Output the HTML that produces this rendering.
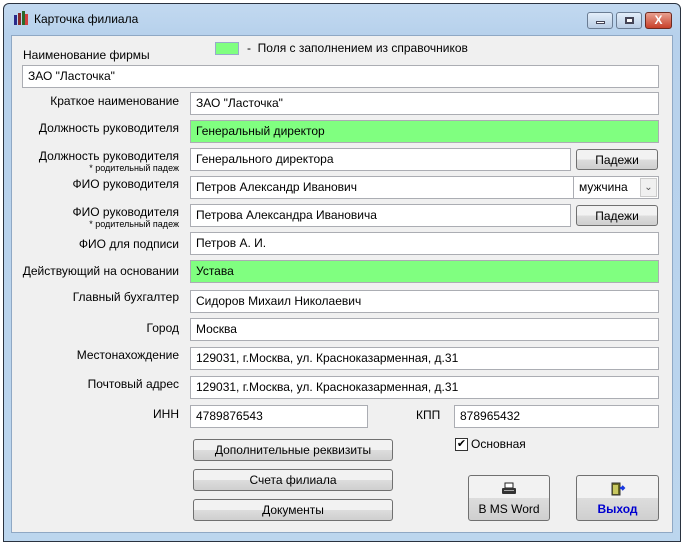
<!DOCTYPE html>
<html><head><meta charset="utf-8"><style>
*{box-sizing:border-box;margin:0;padding:0}
body{width:683px;height:543px;background:#fff;position:relative;overflow:hidden;font-family:"Liberation Sans",Arial,sans-serif;font-size:12px;color:#000}
.win{position:absolute;left:3px;top:3px;width:678px;height:539px;border:1px solid #2a3340;border-radius:6px 6px 0 0;background:linear-gradient(#c2d9f0,#b7d1ec 30px,#bcd6ee);}
.content{position:absolute;left:11px;top:35px;width:662px;height:498px;background:#f0f0f0;border:1px solid #8fa8c4}
.title{position:absolute;left:34px;top:12px;font-size:12px}
.a{position:absolute}
.f{position:absolute;background:#fff;border:1px solid #abadb3;height:23px;padding-left:5px;line-height:21px;white-space:nowrap}
.g{background:#80ff80}
.l{position:absolute;text-align:right;width:170px;left:9px;line-height:13px}
.s{font-size:9px;display:block;line-height:10px}
.b{position:absolute;border:1px solid #707070;border-radius:3px;background:linear-gradient(#f2f2f2 50%,#dddddd 50%,#cfcfcf);text-align:center;line-height:20px}
.wb{position:absolute;top:12px;height:17px;border:1px solid #6a7c93;border-radius:3px;background:linear-gradient(#e3eefa,#b9cde4)}
</style></head><body>
<div class="win"></div>
<div class="a" style="left:13px;top:10px;width:16px;height:16px">
<svg width="16" height="16"><rect x="1" y="5" width="3" height="10" fill="#2a2a8a"/><rect x="5" y="3" width="3" height="12" fill="#8a2a2a"/><rect x="9" y="1" width="3" height="14" fill="#2a6a2a"/><rect x="12" y="4" width="3" height="11" fill="#d04040"/></svg></div>
<div class="title">Карточка филиала</div>
<div class="wb" style="left:587px;width:26px"><div class="a" style="left:8px;top:8px;width:9px;height:3px;background:#fff;border:1px solid #445"></div></div>
<div class="wb" style="left:616px;width:26px"><div class="a" style="left:8px;top:4px;width:9px;height:7px;border:2px solid #445;background:#fff"></div></div>
<div class="a" style="left:645px;top:12px;width:27px;height:17px;border:1px solid #6d2a20;border-radius:3px;background:linear-gradient(#e8a090,#c8402a);color:#fff;font-weight:bold;text-align:center;line-height:15px;font-size:12px">X</div>
<div class="content"></div>

<div class="a" style="left:215px;top:42px;width:24px;height:13px;background:#80ff80;border:1px solid #9ac"></div>
<div class="a" style="left:247px;top:41px">-&nbsp; Поля с заполнением из справочников</div>
<div class="a" style="left:23px;top:48px">Наименование фирмы</div>
<div class="f" style="left:22px;top:65px;width:637px">ЗАО "Ласточка"</div>

<div class="l" style="top:95px">Краткое наименование</div>
<div class="f" style="left:190px;top:92px;width:469px">ЗАО "Ласточка"</div>
<div class="l" style="top:122px">Должность руководителя</div>
<div class="f g" style="left:190px;top:120px;width:469px">Генеральный директор</div>
<div class="l" style="top:150px">Должность руководителя<span class="s">* родительный падеж</span></div>
<div class="f" style="left:190px;top:148px;width:381px">Генерального директора</div>
<div class="b" style="left:576px;top:149px;width:82px;height:21px">Падежи</div>
<div class="l" style="top:178px">ФИО руководителя</div>
<div class="f" style="left:190px;top:176px;width:384px">Петров Александр Иванович</div>
<div class="f" style="left:573px;top:176px;width:86px">мужчина<div class="a" style="right:1px;top:1px;width:17px;height:19px;border:1px solid #ccc;background:#f0f0f0;text-align:center;line-height:17px;color:#555;font-size:10px;padding:0">&#8964;</div></div>
<div class="l" style="top:206px">ФИО руководителя<span class="s">* родительный падеж</span></div>
<div class="f" style="left:190px;top:204px;width:381px">Петрова Александра Ивановича</div>
<div class="b" style="left:576px;top:205px;width:82px;height:21px">Падежи</div>
<div class="l" style="top:238px">ФИО для подписи</div>
<div class="f" style="left:190px;top:232px;width:469px">Петров А. И.</div>
<div class="l" style="top:265px">Действующий на основании</div>
<div class="f g" style="left:190px;top:260px;width:469px">Устава</div>
<div class="l" style="top:291px">Главный бухгалтер</div>
<div class="f" style="left:190px;top:290px;width:469px">Сидоров Михаил Николаевич</div>
<div class="l" style="top:322px">Город</div>
<div class="f" style="left:190px;top:318px;width:469px">Москва</div>
<div class="l" style="top:349px">Местонахождение</div>
<div class="f" style="left:190px;top:347px;width:469px">129031, г.Москва, ул. Красноказарменная, д.31</div>
<div class="l" style="top:378px">Почтовый адрес</div>
<div class="f" style="left:190px;top:376px;width:469px">129031, г.Москва, ул. Красноказарменная, д.31</div>
<div class="l" style="top:408px">ИНН</div>
<div class="f" style="left:190px;top:405px;width:178px">4789876543</div>
<div class="a" style="left:416px;top:408px">КПП</div>
<div class="f" style="left:454px;top:405px;width:205px">878965432</div>

<div class="a" style="left:455px;top:438px;width:13px;height:13px;border:1px solid #333;background:#fff;font-size:11px;line-height:11px;text-align:center">✔</div>
<div class="a" style="left:471px;top:437px">Основная</div>

<div class="b" style="left:193px;top:439px;width:200px;height:22px">Дополнительные реквизиты</div>
<div class="b" style="left:193px;top:469px;width:200px;height:22px">Счета филиала</div>
<div class="b" style="left:193px;top:499px;width:200px;height:22px">Документы</div>

<div class="b" style="left:468px;top:475px;width:82px;height:46px;line-height:14px;padding-top:6px">
<svg width="16" height="14"><rect x="4" y="1" width="8" height="5" fill="#fff" stroke="#222"/><rect x="1" y="6" width="14" height="6" rx="1" fill="#333"/><rect x="3" y="8" width="10" height="1" fill="#aaa"/></svg><br><span style="line-height:20px">B MS Word</span></div>
<div class="b" style="left:576px;top:475px;width:83px;height:46px;line-height:14px;padding-top:6px">
<svg width="16" height="14"><rect x="2" y="1" width="8" height="12" fill="#6a6a20" stroke="#333"/><rect x="3" y="3" width="5" height="9" fill="#c8c860"/><path d="M10 6h4M12 4l2 2-2 2" stroke="#1a3adf" stroke-width="2" fill="none"/></svg><br><span style="line-height:20px;color:#0000d0;font-weight:bold">Выход</span></div>
</body></html>
